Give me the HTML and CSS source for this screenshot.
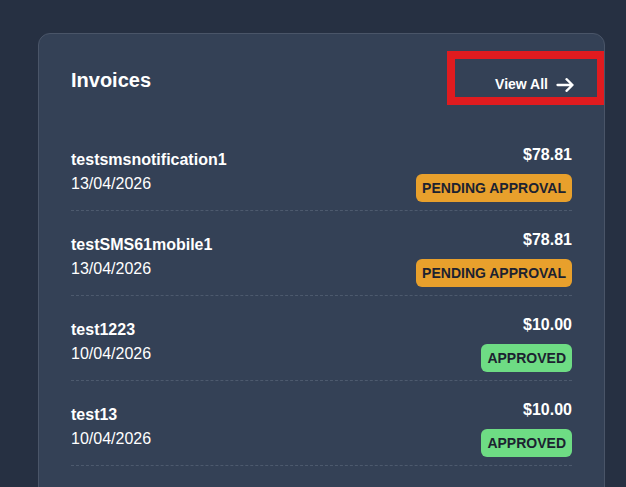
FILE: index.html
```html
<!DOCTYPE html>
<html lang="en">
<head>
<meta charset="utf-8">
<title>Invoices</title>
<link rel="stylesheet" href="styles.css">
</head>
<body>
<section class="card">
  <header class="card-header">
    <h2 class="card-title">Invoices</h2>
    <a class="view-all" href="#">
      <span>View All</span>
      <svg class="arrow" width="18" height="14" viewBox="0 0 18 14" aria-hidden="true">
        <path d="M1.5 7 H16.5 M10.5 1.2 L16.5 7 L10.5 12.8" fill="none" stroke="#ffffff" stroke-width="2.3" stroke-linecap="round" stroke-linejoin="round"/>
      </svg>
    </a>
  </header>
  <ul class="invoice-list">
    <li class="invoice">
      <div class="invoice-info">
        <div class="invoice-name">testsmsnotification1</div>
        <div class="invoice-date">13/04/2026</div>
      </div>
      <div class="invoice-meta">
        <div class="invoice-amount">$78.81</div>
        <span class="badge badge-pending">PENDING APPROVAL</span>
      </div>
    </li>
    <li class="invoice">
      <div class="invoice-info">
        <div class="invoice-name">testSMS61mobile1</div>
        <div class="invoice-date">13/04/2026</div>
      </div>
      <div class="invoice-meta">
        <div class="invoice-amount">$78.81</div>
        <span class="badge badge-pending">PENDING APPROVAL</span>
      </div>
    </li>
    <li class="invoice">
      <div class="invoice-info">
        <div class="invoice-name">test1223</div>
        <div class="invoice-date">10/04/2026</div>
      </div>
      <div class="invoice-meta">
        <div class="invoice-amount">$10.00</div>
        <span class="badge badge-approved">APPROVED</span>
      </div>
    </li>
    <li class="invoice">
      <div class="invoice-info">
        <div class="invoice-name">test13</div>
        <div class="invoice-date">10/04/2026</div>
      </div>
      <div class="invoice-meta">
        <div class="invoice-amount">$10.00</div>
        <span class="badge badge-approved">APPROVED</span>
      </div>
    </li>
  </ul>
</section>
</body>
</html>
```
FILE: styles.css
```css
* { box-sizing: border-box; }

html, body {
  margin: 0;
  padding: 0;
}

body {
  background: #263042;
  font-family: "Liberation Sans", Arial, sans-serif;
  color: #ffffff;
  height: 487px;
  overflow: hidden;
  padding: 33px 0 0 38px;
}

.card {
  width: 567px;
  background: #344156;
  border: 1px solid #4a5568;
  border-radius: 12px;
  padding: 32px;
  overflow: hidden;
  min-height: 520px;
}

.card-header {
  display: flex;
  justify-content: space-between;
  align-items: center;
  height: 28px;
}

.card-title {
  margin: 0;
  font-size: 20px;
  line-height: 28px;
  font-weight: 700;
}

.view-all {
  display: flex;
  align-items: center;
  gap: 8px;
  color: #ffffff;
  text-decoration: none;
  font-weight: 700;
  font-size: 14px;
  line-height: 18px;
  border: 8px solid #e01b1f;
  padding: 16px 23px 4px 40px;
  margin: -15px -33px -11px 0;
}

.arrow {
  display: block;
  margin-top: 2px;
}

.invoice-list {
  list-style: none;
  margin: 32px 0 0;
  padding: 0;
}

.invoice {
  display: flex;
  justify-content: space-between;
  align-items: flex-start;
  padding: 20px 0 8px;
  border-bottom: 1px dashed #4d5a6e;
}

.invoice-info {
  display: flex;
  flex-direction: column;
  margin-top: 2px;
}

.invoice-name {
  font-size: 16px;
  line-height: 24px;
  font-weight: 700;
}

.invoice-date {
  font-size: 16px;
  line-height: 24px;
}

.invoice-meta {
  display: flex;
  flex-direction: column;
  align-items: flex-end;
  gap: 9px;
  margin-top: -1px;
}

.invoice-amount {
  font-size: 16px;
  line-height: 20px;
  font-weight: 700;
}

.badge {
  display: inline-block;
  font-size: 14px;
  line-height: 16px;
  font-weight: 700;
  padding: 6px 6px;
  border-radius: 6px;
  color: #1c2230;
}

.badge-pending { background: #e8a02c; }
.badge-approved { background: #6edc84; }
```
